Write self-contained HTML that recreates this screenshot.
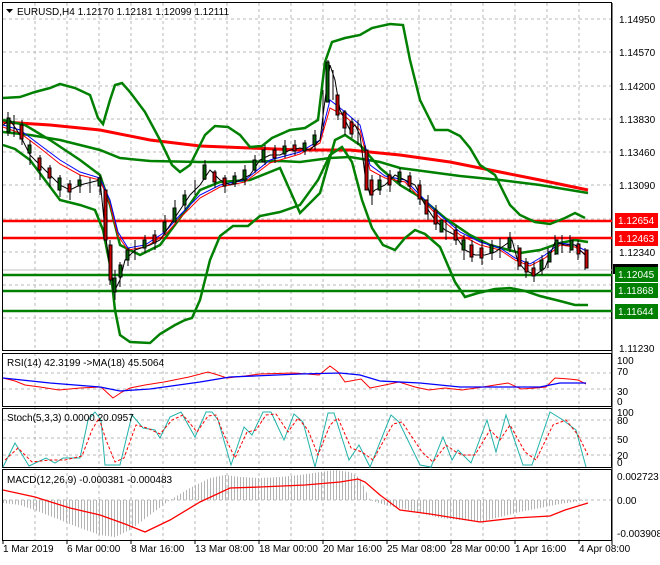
<!DOCTYPE html>
<html><head><style>
body{margin:0;background:#fff;width:660px;height:560px;overflow:hidden;font-family:"Liberation Sans",sans-serif}
svg text{font-family:"Liberation Sans",sans-serif;font-size:10px;fill:#000}
</style></head><body>
<svg width="660" height="560" xmlns="http://www.w3.org/2000/svg">
<defs>
<pattern id="hs" width="3" height="4" patternUnits="userSpaceOnUse"><rect x="0" y="0" width="1" height="4" fill="#b4b4b4"/></pattern>
</defs>
<rect width="660" height="560" fill="#fff"/>
<g stroke="#b8b8b8" stroke-dasharray="3,3" stroke-width="1">
<path d="M35 3V350M67 3V350M99 3V350M131 3V350M163 3V350M195 3V350M227 3V350M259 3V350M291 3V350M323 3V350M355 3V350M387 3V350M419 3V350M451 3V350M483 3V350M515 3V350M547 3V350M579 3V350"/>
<path d="M35 353V540M67 353V540M99 353V540M131 353V540M163 353V540M195 353V540M227 353V540M259 353V540M291 353V540M323 353V540M355 353V540M387 353V540M419 353V540M451 353V540M483 353V540M515 353V540M547 353V540M579 353V540"/>
<path d="M3 19H612M3 52H612M3 86H612M3 119H612M3 152H612M3 185H612M3 219H612M3 252H612M3 285H612M3 318H612"/>
<path d="M3 373H612M3 389H612M3 420H612M3 438H612M3 455H612M3 500H612"/>
</g>
<g fill="none" stroke="#000" stroke-width="1">
<rect x="2.5" y="2.5" width="609" height="348"/>
<rect x="2.5" y="353.5" width="609" height="53"/>
<rect x="2.5" y="408.5" width="609" height="59"/>
<rect x="2.5" y="469.5" width="609" height="71"/>
</g>
<path d="M612 3V545" stroke="#000"/>
<g stroke-width="2.5">
<path d="M3 221H612M3 238H612" stroke="#f00"/>
<path d="M3 275H612M3 291H612M3 311H612" stroke="#008000"/>
</g>
<path d="M3 270H612" stroke="#c0c0c0"/>
<polyline fill="none" stroke="#f00" stroke-width="3" points="3,122 50,125 100,130 150,140 200,146 250,148 300,150 350,150 400,155 450,162 500,172 540,180 588,190"/>
<g fill="none" stroke="#008000" stroke-width="2.5">
<polyline points="3,98 20,97 35,92 50,88 60,84 75,88 90,95 98,118 103,124 110,100 115,85 122,83 130,92 145,112 160,140 172,165 180,172 190,165 205,135 215,126 228,127 240,135 250,147 262,146 272,138 290,130 305,128 318,120 325,62 332,42 345,38 360,35 372,28 390,24 403,25 410,60 420,100 435,130 448,130 460,136 470,148 480,165 495,175 510,205 520,215 535,222 550,224 565,218 575,213 585,218"/>
<polyline points="3,145 15,149 30,160 45,180 60,200 80,205 95,210 103,230 110,265 115,310 120,335 130,342 150,343 160,334 175,325 185,320 192,318 200,300 210,260 220,236 233,226 248,226 260,216 280,212 300,205 318,180 330,155 342,147 352,162 362,200 372,228 383,245 395,250 405,238 415,230 425,234 440,247 455,282 465,297 478,293 495,289 510,288 525,291 540,296 560,301 575,305 588,305"/>
<polyline points="3,132 30,135 60,140 80,145 100,150 120,158 150,161 200,162 240,162 280,161 300,162 330,158 350,157 380,162 400,168 430,172 460,176 500,180 540,185 588,193"/>
<polyline points="3,120 25,125 50,140 80,160 100,175 110,205 120,245 140,255 160,245 180,218 200,190 220,182 250,180 280,168 300,213 320,193 335,140 345,135 360,145 380,168 400,185 420,197 445,218 470,235 490,245 520,253 540,250 560,243 575,240 588,242"/>
</g>
<polyline fill="none" stroke="#00f" stroke-width="1" points="3,125 20,130 40,145 60,160 80,172 100,178 110,200 118,232 128,248 145,245 165,232 180,215 200,195 220,185 245,180 270,160 300,152 320,140 330,100 345,112 360,125 370,165 385,176 405,180 420,195 440,215 460,232 480,242 500,248 515,258 530,264 545,255 560,243 575,245 588,252"/>
<polyline fill="none" stroke="#f00" stroke-width="1" points="3,127 20,133 40,148 60,164 80,175 100,180 110,205 118,236 128,250 145,247 165,235 180,218 200,198 220,187 245,182 270,163 300,154 320,143 330,108 345,116 360,130 370,170 385,178 405,182 420,198 440,218 460,235 480,245 500,250 515,260 530,266 545,258 560,245 575,247 588,256"/>
<polyline fill="none" stroke="#000" stroke-width="1" points="3,125 10,120 20,135 30,155 45,170 60,185 70,190 80,185 100,180 105,230 110,270 115,290 120,280 125,260 135,250 150,245 160,240 170,225 180,210 190,195 200,185 210,170 220,180 230,185 240,180 250,175 260,160 270,155 280,155 290,150 300,148 310,150 320,140 325,100 330,65 335,80 340,110 345,120 350,130 355,125 360,135 365,175 370,195 375,190 385,185 395,175 405,180 415,185 425,205 435,220 445,230 455,235 465,250 475,255 485,255 495,252 505,245 512,240 518,262 525,270 535,275 545,268 550,255 555,242 565,245 575,245 585,255 588,268"/>
<g stroke="#000" stroke-width="1">
<path d="M8 112v24M14 115v22M22 120v25M30 140v25M40 155v25M50 165v22M60 175v22M70 180v20M80 175v18M90 178v15M100 175v20M105 190v50M110 240v45M115 270v30M120 262v25M128 248v18M135 240v20M145 235v18M155 230v20M165 215v20M175 200v20M185 190v20M195 180v15M205 160v20M215 170v18M225 175v18M235 172v15M245 165v20M255 155v18M265 145v20M275 145v18M285 140v18M295 140v15M305 140v15M315 130v20M323 90v40M328 60v40M333 70v30M338 95v25M345 110v25M352 118v20M358 120v25M365 145v45M372 175v30M380 175v20M390 170v22M400 168v18M410 172v20M420 180v25M428 195v25M436 205v25M446 220v20M456 225v20M464 235v25M472 240v22M482 240v25M492 240v20M500 238v20M510 232v20M518 245v25M526 258v20M534 262v20M542 255v20M548 248v20M555 235v20M562 235v18M570 235v18M578 240v20M585 248v22"/>
</g>
<g fill="#006400" stroke="#000">
<rect x="7" y="118" width="3" height="14"/><rect x="28" y="145" width="3" height="8"/><rect x="58" y="178" width="3" height="12"/><rect x="78" y="180" width="3" height="6"/><rect x="98" y="178" width="3" height="8"/><rect x="113" y="278" width="3" height="14"/><rect x="119" y="265" width="3" height="12"/><rect x="126" y="250" width="3" height="10"/><rect x="143" y="240" width="3" height="8"/><rect x="163" y="222" width="3" height="10"/><rect x="173" y="208" width="3" height="14"/><rect x="183" y="195" width="3" height="10"/><rect x="203" y="165" width="3" height="14"/><rect x="233" y="176" width="3" height="8"/><rect x="243" y="170" width="3" height="10"/><rect x="253" y="160" width="3" height="10"/><rect x="262" y="150" width="3" height="12"/><rect x="283" y="146" width="3" height="8"/><rect x="303" y="143" width="3" height="8"/><rect x="313" y="135" width="3" height="10"/><rect x="326" y="62" width="3" height="40"/><rect x="378" y="180" width="3" height="10"/><rect x="398" y="172" width="3" height="10"/><rect x="440" y="220" width="3" height="12"/><rect x="462" y="240" width="3" height="10"/><rect x="490" y="245" width="3" height="8"/><rect x="508" y="238" width="3" height="10"/><rect x="540" y="260" width="3" height="10"/><rect x="548" y="252" width="3" height="10"/><rect x="555" y="240" width="3" height="14"/><rect x="570" y="240" width="3" height="10"/>
</g>
<g fill="#c00" stroke="#000">
<rect x="20" y="125" width="3" height="14"/><rect x="38" y="158" width="3" height="12"/><rect x="48" y="168" width="3" height="10"/><rect x="68" y="184" width="3" height="8"/><rect x="104" y="190" width="3" height="50"/><rect x="109" y="245" width="3" height="35"/><rect x="153" y="235" width="3" height="8"/><rect x="213" y="172" width="3" height="10"/><rect x="223" y="178" width="3" height="8"/><rect x="273" y="150" width="3" height="8"/><rect x="293" y="145" width="3" height="6"/><rect x="336" y="95" width="3" height="20"/><rect x="343" y="112" width="3" height="16"/><rect x="350" y="122" width="3" height="12"/><rect x="365" y="150" width="3" height="40"/><rect x="370" y="180" width="3" height="15"/><rect x="388" y="175" width="3" height="10"/><rect x="408" y="176" width="3" height="10"/><rect x="418" y="185" width="3" height="14"/><rect x="425" y="200" width="3" height="14"/><rect x="434" y="210" width="3" height="14"/><rect x="454" y="230" width="3" height="10"/><rect x="470" y="245" width="3" height="12"/><rect x="480" y="248" width="3" height="10"/><rect x="518" y="248" width="3" height="18"/><rect x="525" y="262" width="3" height="10"/><rect x="532" y="268" width="3" height="8"/><rect x="577" y="244" width="3" height="10"/><rect x="585" y="250" width="3" height="18"/>
</g>
<path d="M6 9h7l-3.5 4z" fill="#000"/>
<text x="17" y="15" font-size="11">EURUSD,H4  1.12170 1.12181 1.12099 1.12111</text>
<g font-size="10">
<text x="619" y="23">1.14950</text><text x="619" y="56">1.14570</text><text x="619" y="90">1.14200</text><text x="619" y="123">1.13830</text><text x="619" y="156">1.13460</text><text x="619" y="189">1.13090</text><text x="619" y="256">1.12340</text><text x="619" y="352">1.11230</text>
</g>
<rect x="613" y="264" width="45" height="10" fill="#000"/>
<rect x="615" y="213" width="43" height="15" fill="#f00"/><text x="618" y="224" style="fill:#fff" font-size="11">1.12654</text>
<rect x="615" y="231" width="43" height="15" fill="#f00"/><text x="618" y="242" style="fill:#fff" font-size="11">1.12463</text>
<rect x="615" y="267" width="43" height="15" fill="#008000"/><text x="618" y="278" style="fill:#fff" font-size="11">1.12045</text>
<rect x="615" y="283" width="43" height="15" fill="#008000"/><text x="618" y="294" style="fill:#fff" font-size="11">1.11868</text>
<rect x="615" y="304" width="43" height="15" fill="#008000"/><text x="618" y="315" style="fill:#fff" font-size="11">1.11644</text>
<text x="7" y="366">RSI(14) 42.3199  -&gt;MA(18) 45.5064</text>
<polyline fill="none" stroke="#f00" points="3,378 15,381 25,385 40,387 59,390 80,388 101,387 113,398 122,392 130,388 145,385 164,382 189,377 208,372 218,375 227,378 245,376 260,374 294,373 319,375 330,366 338,372 345,382 361,379 370,388 385,385 399,382 415,387 429,390 445,388 462,390 483,387 495,385 508,383 521,389 535,388 546,387 555,378 569,379 578,380 586,384"/>
<polyline fill="none" stroke="#00f" stroke-width="1.3" points="3,378 50,383 100,387 120,391 150,389 200,382 230,377 300,374 340,373 360,375 380,381 420,383 460,387 500,387 540,387 560,383 586,383"/>
<g font-size="10"><text x="617" y="364">100</text><text x="617" y="375">70</text><text x="617" y="395">30</text><text x="617" y="405">0</text></g>
<polyline fill="none" stroke="#20b2aa" points="3,467 15,443 29,466 46,458 55,463 63,458 80,458 88,420 95,412 101,420 105,465 120,465 132,415 143,428 155,430 160,438 170,417 181,412 195,437 206,412 212,412 218,420 231,465 244,427 252,435 263,412 271,412 284,440 294,414 303,422 315,467 328,413 334,413 349,460 359,445 370,467 391,415 399,422 420,465 431,467 443,437 452,460 458,450 471,463 487,420 496,452 506,415 523,465 532,465 550,412 563,420 576,430 586,467"/>
<polyline fill="none" stroke="#f00" stroke-dasharray="3,2" points="5,460 18,448 32,462 50,460 65,460 82,456 92,430 99,418 106,440 115,462 124,458 136,425 147,428 160,434 172,420 183,415 197,432 208,416 216,415 224,435 235,458 247,432 256,430 266,415 276,414 288,432 298,418 308,430 318,455 330,425 338,418 351,448 362,452 373,460 393,424 402,422 422,452 433,462 446,445 456,452 463,455 475,455 490,430 500,440 510,425 525,452 536,460 553,425 566,420 578,435 588,455"/>
<text x="7" y="421">Stoch(5,3,3) 0.0000 20.0957</text>
<g font-size="10"><text x="617" y="416">100</text><text x="617" y="424">80</text><text x="617" y="443">50</text><text x="617" y="459">20</text><text x="617" y="466">0</text></g>
<polygon fill="url(#hs)" points="3,500 3,503 20,505 40,512 60,520 80,528 100,535 115,537 130,530 150,515 170,500 190,488 210,478 225,475 240,477 260,478 280,477 300,475 320,472 335,470 350,472 360,478 370,500 385,505 400,508 420,513 440,518 460,520 480,522 500,517 520,512 540,508 560,504 588,500"/>
<polyline fill="none" stroke="#f00" stroke-width="1.3" points="3,490 35,497 70,508 100,515 125,524 145,532 170,520 200,502 230,488 260,487 305,485 340,482 358,479 365,482 380,495 400,510 430,514 480,522 515,518 550,516 565,510 588,503"/>
<text x="7" y="483">MACD(12,26,9) -0.000381 -0.000483</text>
<g font-size="10"><text x="617" y="480">0.002723</text><text x="617" y="504">0.00</text><text x="617" y="537">-0.003908</text></g>
<g font-size="11"><text x="3" y="552">1 Mar 2019</text><text x="67" y="552">6 Mar 00:00</text><text x="131" y="552">8 Mar 16:00</text><text x="195" y="552">13 Mar 08:00</text><text x="259" y="552">18 Mar 00:00</text><text x="323" y="552">20 Mar 16:00</text><text x="387" y="552">25 Mar 08:00</text><text x="451" y="552">28 Mar 00:00</text><text x="515" y="552">1 Apr 16:00</text><text x="579" y="552">4 Apr 08:00</text></g>
<g stroke="#000"><path d="M3 540v4M67 540v4M131 540v4M195 540v4M259 540v4M323 540v4M387 540v4M451 540v4M515 540v4M579 540v4"/></g>
</svg>
</body></html>
